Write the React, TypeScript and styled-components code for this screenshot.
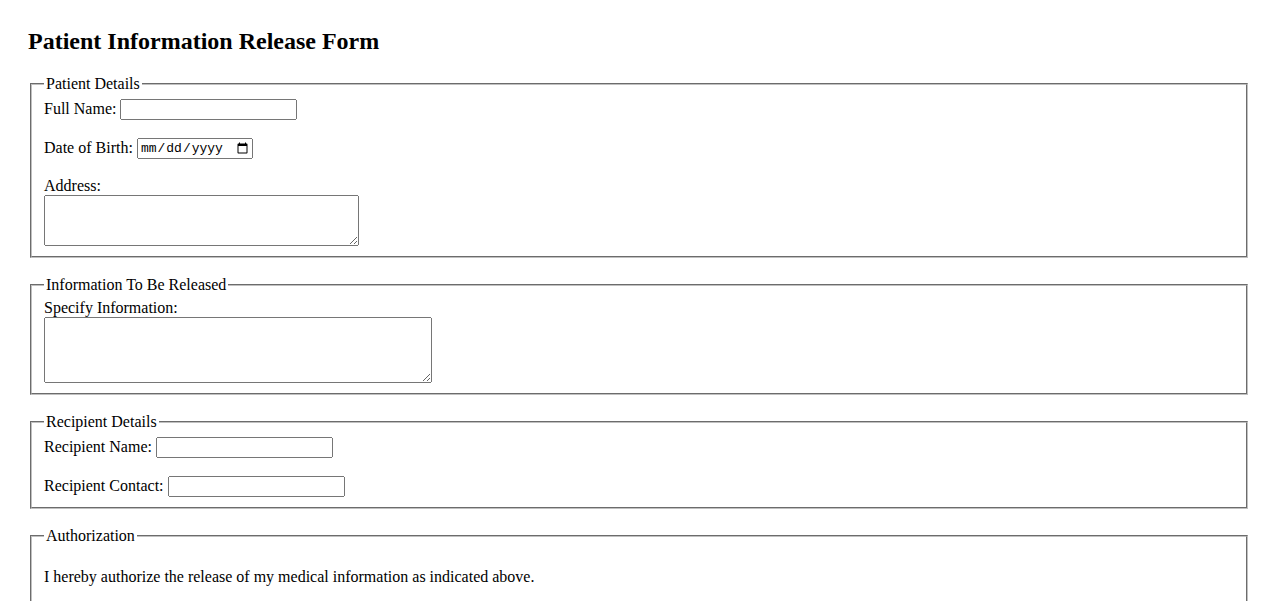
import styled, { createGlobalStyle } from "styled-components";

const GlobalStyle = createGlobalStyle`
  html, body {
    margin: 0;
    padding: 0;
    background: #fff;
  }
  body {
    font-family: "Liberation Serif", "Times New Roman", serif;
    font-size: 16px;
    color: #000;
  }
`;

const Page = styled.div`
  padding: 28px;
`;

const Title = styled.h2`
  margin: 0 0 19.92px;
  font-size: 24px;
  font-weight: bold;
`;

const Section = styled.fieldset`
  margin: 0 2px 18px;
  padding: 0.35em 0.75em 0.625em;
  border: 2px groove rgb(192, 192, 192);
  display: flex;
  flex-direction: column;
  gap: 18px;
`;

const Legend = styled.legend`
  padding: 0 2px;
`;

const Row = styled.div`
  display: flex;
  align-items: center;
  gap: 4px;
`;

const Stack = styled.div`
  display: flex;
  flex-direction: column;
`;

const Label = styled.label`
  line-height: 18px;
`;

const TextInput = styled.input`
  box-sizing: border-box;
  width: 177px;
  height: 21px;
  margin: 0;
`;

const DateInput = styled.input`
  box-sizing: border-box;
  width: 116px;
  height: 21px;
  margin: 0;
  font-family: "Liberation Mono", "DejaVu Sans Mono", monospace;
  font-size: 13px;
`;

const TextArea = styled.textarea<{ $w: number; $h: number }>`
  display: block;
  box-sizing: border-box;
  width: ${(p) => p.$w}px;
  height: ${(p) => p.$h}px;
  margin: 0;
`;

const Note = styled.p`
  margin: 18px 0 14px;
  line-height: 18px;
`;

const Check = styled.input`
  margin: 0;
`;

const SubmitButton = styled.button`
  align-self: flex-start;
  font-size: 13px;
`;

export default function App() {
  return (
    <>
      <GlobalStyle />
      <Page>
        <Title>Patient Information Release Form</Title>
        <form onSubmit={(e) => e.preventDefault()}>
          <Section>
            <Legend>Patient Details</Legend>
            <Row>
              <Label htmlFor="fullName">Full Name:</Label>
              <TextInput type="text" id="fullName" />
            </Row>
            <Row>
              <Label htmlFor="dob">Date of Birth:</Label>
              <DateInput type="date" id="dob" />
            </Row>
            <Stack>
              <Label htmlFor="address">Address:</Label>
              <TextArea id="address" $w={315} $h={51} />
            </Stack>
          </Section>

          <Section>
            <Legend>Information To Be Released</Legend>
            <Stack>
              <Label htmlFor="info">Specify Information:</Label>
              <TextArea id="info" $w={388} $h={66} />
            </Stack>
          </Section>

          <Section>
            <Legend>Recipient Details</Legend>
            <Row>
              <Label htmlFor="recipientName">Recipient Name:</Label>
              <TextInput type="text" id="recipientName" />
            </Row>
            <Row>
              <Label htmlFor="recipientContact">Recipient Contact:</Label>
              <TextInput type="text" id="recipientContact" />
            </Row>
          </Section>

          <Section>
            <Legend>Authorization</Legend>
            <Note>I hereby authorize the release of my medical information as indicated above.</Note>
            <Row>
              <Check type="checkbox" id="agree" />
              <Label htmlFor="agree">I agree</Label>
            </Row>
            <Row>
              <Label htmlFor="signature">Signature:</Label>
              <TextInput type="text" id="signature" />
            </Row>
            <Row>
              <Label htmlFor="signDate">Date:</Label>
              <DateInput type="date" id="signDate" />
            </Row>
          </Section>

          <SubmitButton type="submit">Submit</SubmitButton>
        </form>
      </Page>
    </>
  );
}
